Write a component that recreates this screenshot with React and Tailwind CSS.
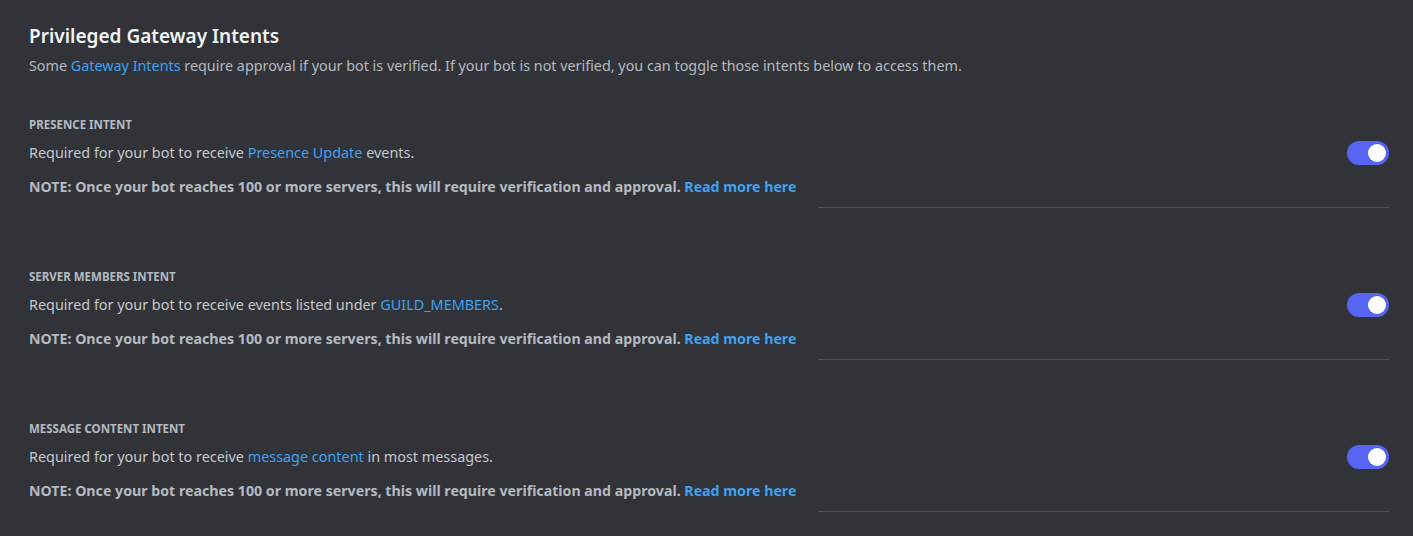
import React, { useState } from "react";

const intents = [
  {
    label: "PRESENCE INTENT",
    body: ["Required for your bot to receive ", "Presence Update", " events."],
  },
  {
    label: "SERVER MEMBERS INTENT",
    body: ["Required for your bot to receive events listed under ", "GUILD_MEMBERS", "."],
  },
  {
    label: "MESSAGE CONTENT INTENT",
    body: ["Required for your bot to receive ", "message content", " in most messages."],
  },
];

function Toggle({ on, onClick }) {
  return (
    <button
      onClick={onClick}
      className={`relative w-[42px] h-[24px] rounded-full shrink-0 ${on ? "bg-[#5865f2]" : "bg-[#80848e]"}`}
    >
      <span
        className={`absolute top-[3px] w-[18px] h-[18px] rounded-full bg-white ${on ? "right-[3px]" : "left-[3px]"}`}
      ></span>
    </button>
  );
}

export default function App() {
  const [state, setState] = useState([true, true, true]);

  return (
    <div className="bg-[#313338] min-h-screen w-full pl-[29px] pr-6 pt-[24px] font-['Noto_Sans',sans-serif]">
      <h2 className="text-[19px] leading-[24px] font-semibold text-[#f2f3f5]">
        Privileged Gateway Intents
      </h2>
      <p className="text-[14.35px] leading-[20px] mt-[8px] text-[#b5bac1]">
        Some <span className="text-[#3ea2f2]">Gateway Intents</span> require approval if your bot is
        verified. If your bot is not verified, you can toggle those intents below to access them.
      </p>

      {intents.map((it, i) => (
        <div key={it.label} className={i === 0 ? "mt-[41px]" : "mt-[61px]"}>
          <div className="text-[11.5px] leading-[16px] font-bold text-[#b5bac1]">{it.label}</div>
          <div className="flex items-center justify-between mt-[8px]">
            <p className="text-[14.4px] leading-[20px] text-[#c4c9ce]">
              {it.body[0]}
              <span className="text-[#3ea2f2]">{it.body[1]}</span>
              {it.body[2]}
            </p>
            <Toggle
              on={state[i]}
              onClick={() => setState(state.map((v, j) => (j === i ? !v : v)))}
            />
          </div>
          <p className="text-[14.2px] leading-[20px] font-bold text-[#b5bac1] mt-[12px]">
            NOTE: Once your bot reaches 100 or more servers, this will require verification and
            approval. <span className="text-[#3ea2f2]">Read more here</span>
          </p>
          <div className="flex mt-[10px]">
            <div className="ml-auto w-[571px] h-px bg-[#4e5058]"></div>
          </div>
        </div>
      ))}
    </div>
  );
}
